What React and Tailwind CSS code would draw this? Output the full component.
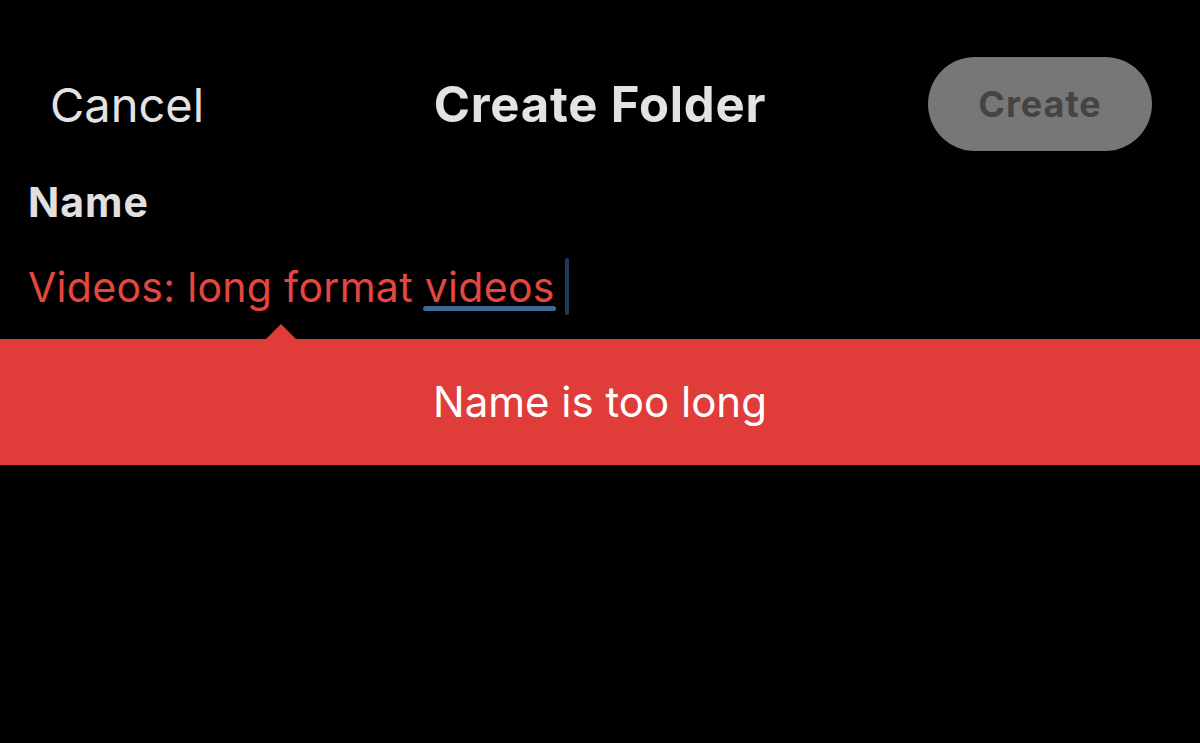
export default function App() {
  return (
    <div className="w-[1200px] h-[743px] bg-black overflow-hidden font-['Inter',sans-serif]">
      {/* Header */}
      <div className="mt-[57px] h-[94px] grid grid-cols-[1fr_auto_1fr] items-center">
        <div className="pl-[50px] text-[47px] leading-none text-[#e3e3e3]">Cancel</div>
        <div className="text-[49px] leading-none font-bold tracking-[0.8px] text-[#e3e3e3]">Create Folder</div>
        <div className="flex justify-end pr-[48px]">
          <button className="w-[224px] h-[94px] rounded-full bg-[#777777] text-[36px] leading-none font-bold tracking-[1px] text-[#444444]">
            Create
          </button>
        </div>
      </div>

      {/* Name field */}
      <div className="mt-[31px] pl-[28px] text-[41px] leading-none font-bold tracking-[1px] text-[#e0e0e0]">Name</div>

      <div className="mt-[44px] pl-[28px] flex items-start">
        <div className="text-[41px] leading-none tracking-[0.3px] text-[#e5463f]">
          Videos: long format{" "}
          <span className="relative">
            videos
            <span className="absolute left-[-2px] right-[-1px] bottom-[1px] h-[5px] rounded-full bg-[#3e6a98]" />
          </span>
        </div>
        <div className="ml-[10px] mt-[-9px] w-[4px] h-[57px] rounded-sm bg-[#1d3a56]" />
      </div>

      {/* Error banner */}
      <div className="mt-[9px] pl-[266px] flex">
        <svg width="30" height="15" viewBox="0 0 30 15" className="block">
          <path d="M0 15 L15 0 L30 15 Z" fill="#e03c3a" />
        </svg>
      </div>
      <div className="h-[126px] bg-[#e03c3a] flex items-center justify-center">
        <span className="text-[42px] leading-none text-white">Name is too long</span>
      </div>
    </div>
  );
}
